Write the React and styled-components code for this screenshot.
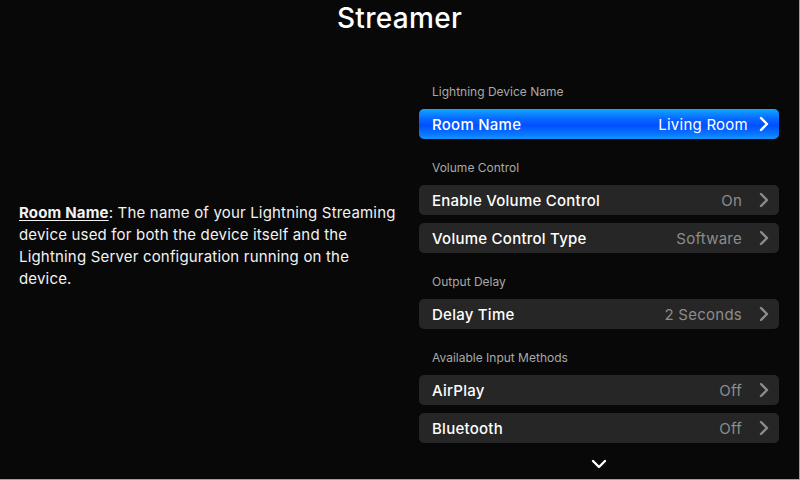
import React from "react";
import styled, { createGlobalStyle } from "styled-components";

const Global = createGlobalStyle`
  html, body { margin: 0; padding: 0; background: #080808; }
  body { font-family: Inter, "Noto Sans", sans-serif; color: #fff; }
`;

const Screen = styled.div`
  width: 800px;
  height: 480px;
  box-sizing: border-box;
  background: #080808;
  border-right: 1px solid #a0a0a0;
  border-bottom: 1px solid #a0a0a0;
  display: flex;
  flex-direction: column;
  overflow: hidden;
`;

const Title = styled.h1`
  margin: 0;
  height: 36px;
  line-height: 36px;
  font-size: 28px;
  font-weight: 500;
  text-align: center;
  letter-spacing: 0.3px;
`;

const Main = styled.div`
  display: flex;
  flex: 1;
`;

const Info = styled.p`
  margin: 166px 0 0 19px;
  width: 381px;
  font-size: 15px;
  line-height: 22px;
  letter-spacing: 0.18px;
  color: #f2f2f2;
`;

const InfoKey = styled.span`
  font-weight: 700;
  text-decoration: underline;
  text-underline-offset: 2px;
`;

const List = styled.div`
  margin-left: 19px;
  padding-top: 48px;
  width: 360px;
  display: flex;
  flex-direction: column;
  gap: 21px;
`;

const Section = styled.section`
  display: flex;
  flex-direction: column;
`;

const SectionLabel = styled.div`
  padding: 0 13px;
  font-size: 12px;
  line-height: 16px;
  color: #a8a8a8;
  margin-bottom: 9px;
`;

const Rows = styled.div`
  display: flex;
  flex-direction: column;
  gap: 8px;
`;

const Row = styled.div`
  height: 30px;
  border-radius: 5px;
  display: flex;
  align-items: center;
  padding: 0 10px 0 13px;
  background: ${(p) =>
    p.$active
      ? "linear-gradient(180deg, #10a8ff 0%, #0a6cff 30%, #0050ff 55%, #0a78ff 85%, #1296ff 100%)"
      : "#262626"};
`;

const RowLabel = styled.span`
  flex: 1;
  font-size: 15px;
  font-weight: 500;
  letter-spacing: 0.25px;
  color: #fff;
`;

const RowValue = styled.span`
  font-size: 15px;
  letter-spacing: 0.25px;
  color: ${(p) => (p.$active ? "#fff" : "#8c8c8c")};
  margin-right: ${(p) => (p.$active ? "11px" : "17px")};
`;

const ChevronBox = styled.svg`
  display: block;
  width: 10px;
  height: 16px;
`;

const Chevron = ({ color }) => (
  <ChevronBox viewBox="0 0 10 16">
    <polyline
      points="2,2 8,8 2,14"
      fill="none"
      stroke={color}
      strokeWidth="2.4"
      strokeLinecap="round"
      strokeLinejoin="round"
    />
  </ChevronBox>
);

const More = styled.div`
  display: flex;
  justify-content: center;
  margin-top: -5px;
`;

const DownBox = styled.svg`
  display: block;
  width: 16px;
  height: 10px;
`;

const sections = [
  {
    label: "Lightning Device Name",
    rows: [{ name: "Room Name", value: "Living Room", active: true }],
  },
  {
    label: "Volume Control",
    rows: [
      { name: "Enable Volume Control", value: "On" },
      { name: "Volume Control Type", value: "Software" },
    ],
  },
  {
    label: "Output Delay",
    rows: [{ name: "Delay Time", value: "2 Seconds" }],
  },
  {
    label: "Available Input Methods",
    rows: [
      { name: "AirPlay", value: "Off" },
      { name: "Bluetooth", value: "Off" },
    ],
  },
];

export default function App() {
  return (
    <Screen>
      <Global />
      <Title>Streamer</Title>
      <Main>
        <Info>
          <InfoKey>Room Name</InfoKey>: The name of your Lightning Streaming
          device used for both the device itself and the Lightning Server
          configuration running on the device.
        </Info>
        <List>
          {sections.map((s) => (
            <Section key={s.label}>
              <SectionLabel>{s.label}</SectionLabel>
              <Rows>
                {s.rows.map((r) => (
                  <Row key={r.name} $active={r.active}>
                    <RowLabel>{r.name}</RowLabel>
                    <RowValue $active={r.active}>{r.value}</RowValue>
                    <Chevron color={r.active ? "#ffffff" : "#8c8c8c"} />
                  </Row>
                ))}
              </Rows>
            </Section>
          ))}
          <More>
            <DownBox viewBox="0 0 16 10">
              <polyline
                points="2,2 8,8 14,2"
                fill="none"
                stroke="#fff"
                strokeWidth="2.4"
                strokeLinecap="round"
                strokeLinejoin="round"
              />
            </DownBox>
          </More>
        </List>
      </Main>
    </Screen>
  );
}
